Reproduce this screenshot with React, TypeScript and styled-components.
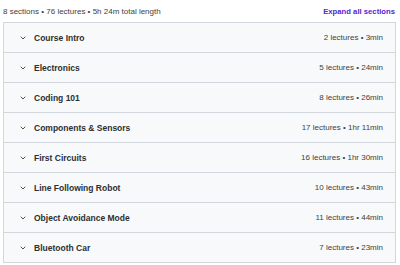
import React from "react";
import styled, { createGlobalStyle } from "styled-components";

const Global = createGlobalStyle`
  html, body { margin: 0; padding: 0; background: #ffffff; }
  body { font-family: "Liberation Sans", Arial, sans-serif; color: #2d2f31; }
`;

const Wrap = styled.div`
  width: 400px;
  padding: 0 4px 0 3px;
  box-sizing: border-box;
`;

const Header = styled.div`
  display: flex;
  align-items: center;
  justify-content: space-between;
  height: 22px;
  padding-top: 1px;
  box-sizing: border-box;
`;

const Summary = styled.span`
  font-size: 8px;
  color: #3e4143;
`;

const ExpandBtn = styled.button`
  border: 0;
  background: none;
  padding: 0 1px 0 0;
  font-family: inherit;
  font-size: 7.7px;
  font-weight: 700;
  color: #5624d0;
  cursor: pointer;
`;

const List = styled.div`
  border: 1px solid #d1d7dc;
  display: flex;
  flex-direction: column;
`;

const Row = styled.div<{ $last?: boolean }>`
  display: flex;
  align-items: center;
  height: 29px;
  padding: 0 12px 0 15px;
  background: #f7f9fa;
  border-bottom: ${(p) => (p.$last ? "0" : "1px solid #d1d7dc")};
`;

const Chevron = styled.svg`
  width: 8px;
  height: 8px;
  margin-right: 7px;
  flex: none;
`;

const Title = styled.span`
  font-size: 8.5px;
  font-weight: 700;
  color: #2d2f31;
  flex: 1;
`;

const Meta = styled.span`
  font-size: 8px;
  color: #3e4143;
`;

const sections = [
  ["Course Intro", "2 lectures • 3min"],
  ["Electronics", "5 lectures • 24min"],
  ["Coding 101", "8 lectures • 26min"],
  ["Components & Sensors", "17 lectures • 1hr 11min"],
  ["First Circuits", "16 lectures • 1hr 30min"],
  ["Line Following Robot", "10 lectures • 43min"],
  ["Object Avoidance Mode", "11 lectures • 44min"],
  ["Bluetooth Car", "7 lectures • 23min"],
];

export default function App() {
  return (
    <Wrap>
      <Global />
      <Header>
        <Summary>8 sections • 76 lectures • 5h 24m total length</Summary>
        <ExpandBtn>Expand all sections</ExpandBtn>
      </Header>
      <List>
        {sections.map(([t, m], i) => (
          <Row key={t} $last={i === sections.length - 1}>
            <Chevron viewBox="0 0 24 24" fill="none" stroke="#2d2f31" strokeWidth="2.5" strokeLinecap="round" strokeLinejoin="round">
              <path d="M6 9l6 6 6-6" />
            </Chevron>
            <Title>{t}</Title>
            <Meta>{m}</Meta>
          </Row>
        ))}
      </List>
    </Wrap>
  );
}
